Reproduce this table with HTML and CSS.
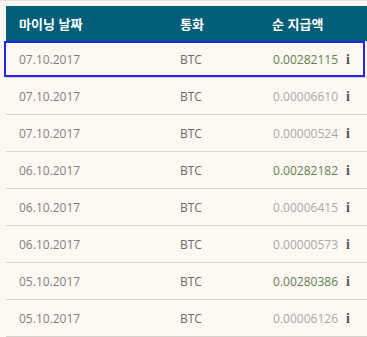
FILE: index.html
```html
<!DOCTYPE html>
<html lang="ko">
<head>
<meta charset="utf-8">
<link rel="stylesheet" href="styles.css">
</head>
<body>
<div class="page">
  <div class="table">
    <div class="row head">
      <div class="c date">마이닝 날짜</div>
      <div class="c cur">통화</div>
      <div class="c amt">순 지급액</div>
    </div>
    <div class="row">
      <div class="c date">07.10.2017</div><div class="c cur">BTC</div>
      <div class="c amt"><span class="val big">0.00282115</span><span class="info">i</span></div>
      <div class="hl"></div>
    </div>
    <div class="row">
      <div class="c date">07.10.2017</div><div class="c cur">BTC</div>
      <div class="c amt"><span class="val">0.00006610</span><span class="info">i</span></div>
    </div>
    <div class="row">
      <div class="c date">07.10.2017</div><div class="c cur">BTC</div>
      <div class="c amt"><span class="val">0.00000524</span><span class="info">i</span></div>
    </div>
    <div class="row">
      <div class="c date">06.10.2017</div><div class="c cur">BTC</div>
      <div class="c amt"><span class="val big">0.00282182</span><span class="info">i</span></div>
    </div>
    <div class="row">
      <div class="c date">06.10.2017</div><div class="c cur">BTC</div>
      <div class="c amt"><span class="val">0.00006415</span><span class="info">i</span></div>
    </div>
    <div class="row">
      <div class="c date">06.10.2017</div><div class="c cur">BTC</div>
      <div class="c amt"><span class="val">0.00000573</span><span class="info">i</span></div>
    </div>
    <div class="row">
      <div class="c date">05.10.2017</div><div class="c cur">BTC</div>
      <div class="c amt"><span class="val big">0.00280386</span><span class="info">i</span></div>
    </div>
    <div class="row">
      <div class="c date">05.10.2017</div><div class="c cur">BTC</div>
      <div class="c amt"><span class="val">0.00006126</span><span class="info">i</span></div>
    </div>
  </div>
</div>
</body>
</html>
```
FILE: styles.css
```css
html, body {
  margin: 0;
  padding: 0;
  background: #fdf9f2;
  overflow: hidden;
}
.page {
  border-top: 1px solid #e6e2dc;
  padding: 5px 0 0 6px;
  font-family: "Open Sans", "Noto Sans CJK KR", sans-serif;
}
.table {
  width: 361px;
}
.row {
  position: relative;
  display: grid;
  grid-template-columns: 161px 92px 1fr;
  padding-left: 13px;
  height: 36px;
  align-items: center;
  border-bottom: 1px solid #d6d3cd;
  font-size: 12px;
  color: #808080;
}
.row.head {
  height: 35px;
  background: #015e78;
  border-bottom: none;
  color: #ffffff;
  font-family: "Noto Sans CJK KR", sans-serif;
  font-weight: 700;
  font-size: 13px;
}
.cur {
  color: #6a6a6a;
}
.head .cur { color: #fff; }
.amt {
  display: flex;
  align-items: baseline;
}
.val {
  color: #a8a8a8;
  width: 66px;
  text-align: right;
}
.val.big {
  color: #5d7f52;
}
.info {
  margin-left: 8px;
  font-family: "Liberation Serif", serif;
  font-weight: 700;
  font-size: 14px;
  color: #555;
}
.hl {
  position: absolute;
  left: -2px;
  top: 0;
  width: 357px;
  height: 32px;
  border: 2px solid #2424f0;
}
```
